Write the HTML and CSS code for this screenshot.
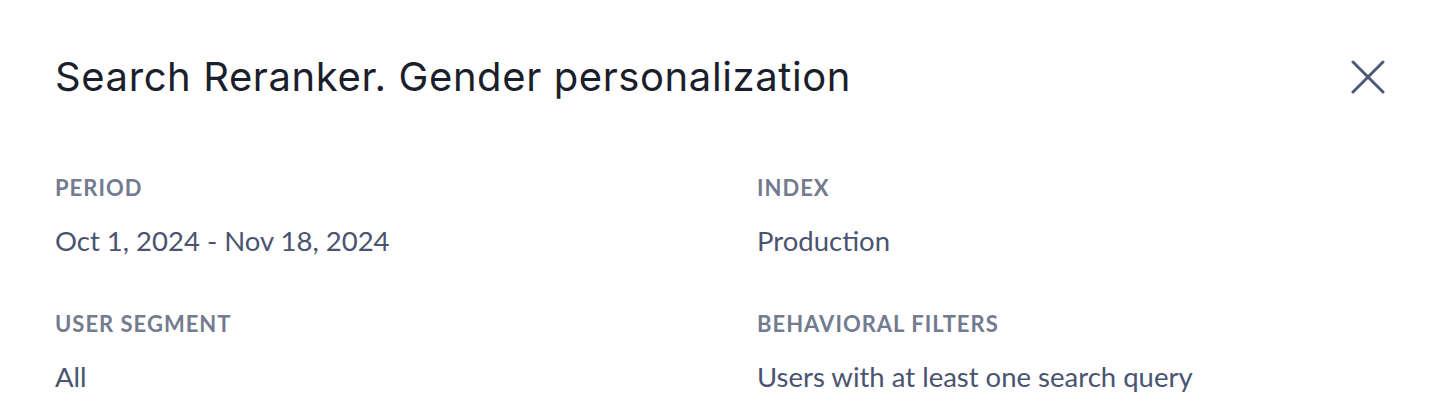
FILE: index.html
```html
<!DOCTYPE html>
<html lang="en">
<head>
  <meta charset="UTF-8">
  <meta name="viewport" content="width=device-width, initial-scale=1.0">
  <title>Experiment details</title>
  <link rel="stylesheet" href="styles.css">
</head>
<body>
  <div class="modal">
    <div class="modal-header">
      <h1>Search Reranker. Gender personalization</h1>
      <button class="close-btn" aria-label="Close">
        <svg width="34" height="34" viewBox="0 0 34 34">
          <path d="M2 2 L32 32 M32 2 L2 32" stroke="#4f5874" stroke-width="3" stroke-linecap="round" fill="none"/>
        </svg>
      </button>
    </div>

    <div class="details">
      <div class="detail">
        <div class="detail-label">Period</div>
        <div class="detail-value">Oct 1, 2024 - Nov 18, 2024</div>
      </div>
      <div class="detail">
        <div class="detail-label">Index</div>
        <div class="detail-value">Production</div>
      </div>
      <div class="detail">
        <div class="detail-label">User segment</div>
        <div class="detail-value">All</div>
      </div>
      <div class="detail">
        <div class="detail-label">Behavioral filters</div>
        <div class="detail-value">Users with at least one search query</div>
      </div>
    </div>
  </div>
</body>
</html>
```

FILE: styles.css
```css
/* Reset */
* {
  margin: 0;
  padding: 0;
  box-sizing: border-box;
}

html, body {
  height: 100%;
  background: #fff;
  font-family: 'Lato', Arial, sans-serif;
  overflow: hidden;
}

/* Modal */
.modal {
  padding: 55px 49px 0 55px;
}

.modal-header {
  display: flex;
  justify-content: space-between;
  align-items: center;
  margin-bottom: 75px;
}

.modal-header h1 {
  font-family: 'Inter', 'Open Sans', sans-serif;
  font-size: 40px;
  font-weight: 400;
  color: #1b1e2b;
  letter-spacing: 0.6px;
  line-height: 44px;
}

.close-btn {
  background: none;
  border: none;
  cursor: pointer;
  display: flex;
  padding: 0;
}

/* Detail grid */
.details {
  display: grid;
  grid-template-columns: 702px 1fr;
  row-gap: 52px;
}

.detail-label {
  font-size: 22px;
  font-weight: 700;
  text-transform: uppercase;
  letter-spacing: 1px;
  color: #737b8f;
  line-height: 28px;
  margin-bottom: 22px;
}

.detail-value {
  font-size: 27.5px;
  color: #4a5470;
  line-height: 34px;
}
```
